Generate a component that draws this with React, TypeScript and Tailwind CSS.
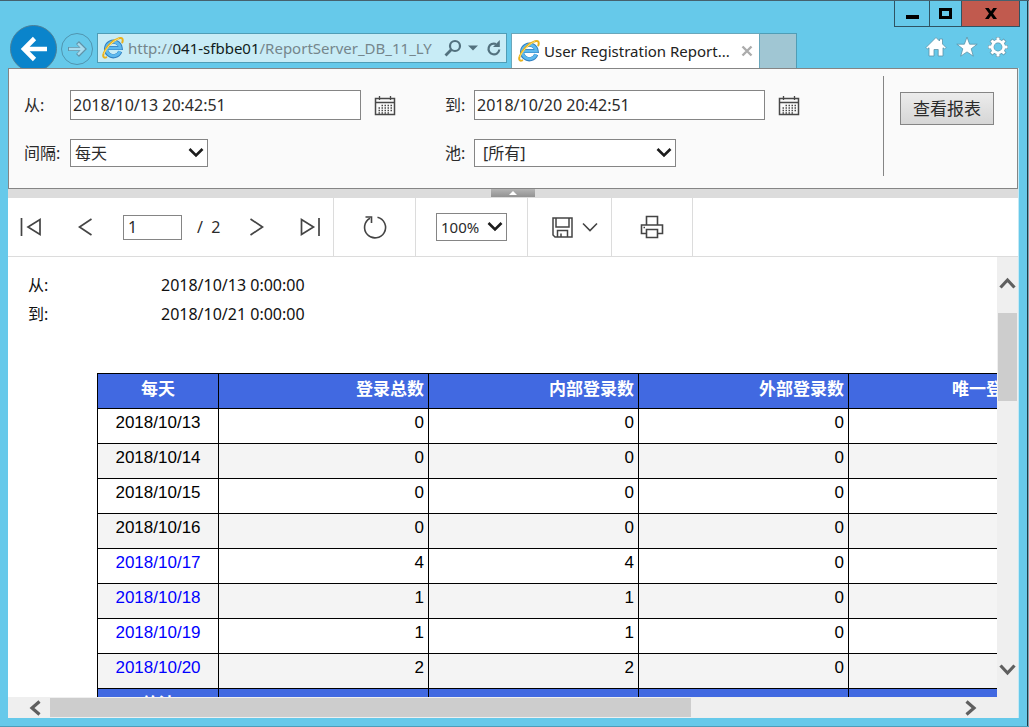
import React from "react";

const rows = [
  { date: "2018/10/13", total: 0, internal: 0, external: 0, link: false },
  { date: "2018/10/14", total: 0, internal: 0, external: 0, link: false },
  { date: "2018/10/15", total: 0, internal: 0, external: 0, link: false },
  { date: "2018/10/16", total: 0, internal: 0, external: 0, link: false },
  { date: "2018/10/17", total: 4, internal: 4, external: 0, link: true },
  { date: "2018/10/18", total: 1, internal: 1, external: 0, link: true },
  { date: "2018/10/19", total: 1, internal: 1, external: 0, link: true },
  { date: "2018/10/20", total: 2, internal: 2, external: 0, link: true },
];

const headings = ["每天", "登录总数", "内部登录数", "外部登录数", "唯一登录总数"];

function ExplorerLogo() {
  return (
    <svg width="22" height="22" viewBox="0 0 22 22" fill="none" className="shrink-0">
      <path d="M18.2 14.5A7.3 7.3 0 1 1 18.6 11H6" stroke="#2f7fc0" strokeWidth="4.2" />
      <path d="M18 14.3A7 7 0 1 1 18.4 11.2H6" stroke="#5db9ee" strokeWidth="2.8" />
      <path
        d="M4.2 20.4C1.4 21.4.6 19.200 1.700 16.400C3.600 11 10.500 3.200 17 1.300C20.600.2 21.300 2.400 20.300 5.500"
        stroke="#e9b21c"
        strokeWidth="2"
        strokeLinecap="round"
      />
      <path d="M2 17C4 11.500 10.500 4 17 1.600" stroke="#ffe27a" strokeWidth="1" />
    </svg>
  );
}

function CalendarIcon() {
  return (
    <svg width="22" height="21" viewBox="0 0 22 21" fill="none" stroke="#484848">
      <path d="M1.500 3.500h19v16h-19z" strokeWidth="1.500" />
      <path d="M1 7.500h20M5.500 1v4M16.500 1v4" strokeWidth="1.300" />
      <path d="M7.500 10.500h11M4.500 13h14M4.500 15.500h14M4.500 18h11" strokeWidth="1.500" strokeDasharray="1.500 1.500" />
    </svg>
  );
}

function BoldChevron() {
  return (
    <svg
      width="16"
      height="11"
      viewBox="0 0 16 11"
      fill="none"
      className="pointer-events-none absolute right-1 top-1/2 -translate-y-1/2"
    >
      <path d="M1.500 1.500L8 8L14.500 1.500" stroke="#1c1c1c" strokeWidth="2.600" />
    </svg>
  );
}

function ScrollArrow({ d, width, height, label }: { d: string; width: number; height: number; label: string }) {
  return (
    <button type="button" aria-label={label} className="flex shrink-0 items-center justify-center">
      <svg width={width} height={height} viewBox={`0 0 ${width} ${height}`} fill="none">
        <path d={d} stroke="#5f5f5f" strokeWidth="3.200" />
      </svg>
    </button>
  );
}

function Header() {
  return (
    <header className="flex h-[67px] shrink-0 items-start overflow-hidden">
      <div className="flex min-w-0 flex-1 items-start pl-[10px] pt-6">
        <button
          type="button"
          aria-label="后退"
          className="flex h-[47px] w-[47px] shrink-0 items-center justify-center rounded-full border border-[#4b7f97] bg-[#0a84cb]"
        >
          <svg width="28" height="26" viewBox="0 0 28 26" fill="none">
            <path d="M27 13H5M14.500 2.500L4 13L14.500 23.500" stroke="#fff" strokeWidth="4.600" />
          </svg>
        </button>
        <button
          type="button"
          aria-label="前进"
          className="ml-1 mt-2 flex h-8 w-8 shrink-0 items-center justify-center rounded-full border border-[#5095b0]"
        >
          <svg width="20" height="16" viewBox="0 0 20 16" fill="none">
            <path d="M1 8H17M10.500 1.500L17 8L10.500 14.500" stroke="#6193a8" strokeWidth="4.200" />
            <path d="M2 8H16M11 2.500L16.500 8L11 13.500" stroke="#a9dcef" strokeWidth="2.400" />
          </svg>
        </button>
        <div className="ml-1 mt-2 flex h-[30px] w-[410px] items-center border border-[#4f9db6] bg-[#c8ecf6] pl-1 pr-1">
          <ExplorerLogo />
          <span className="ml-1 min-w-0 flex-1 overflow-hidden whitespace-nowrap text-[15px] text-[#75868c]">
            http://<span className="text-[#111b20]">041-sfbbe01</span>/ReportServer_DB_11_LY
          </span>
          <button type="button" aria-label="搜索" className="ml-[6px] shrink-0">
            <svg width="18" height="18" viewBox="0 0 18 18" fill="none" stroke="#52717e">
              <circle cx="11" cy="7" r="5" strokeWidth="2.200" />
              <path d="M7.200 10.800L1.500 16.500" strokeWidth="2.800" />
            </svg>
          </button>
          <button type="button" aria-label="显示地址列表" className="ml-[6px] shrink-0">
            <svg width="10" height="6" viewBox="0 0 10 6">
              <path d="M0 .5h10L5 5.500z" fill="#52717e" />
            </svg>
          </button>
          <button type="button" aria-label="刷新" className="ml-2 shrink-0">
            <svg width="16" height="18" viewBox="0 0 16 18" fill="none">
              <path d="M13.300 10.500A5.400 5.400 0 1 1 10 5" stroke="#52717e" strokeWidth="2.200" />
              <path d="M13.800 1v7H7z" fill="#52717e" />
            </svg>
          </button>
        </div>
        <div className="ml-1 mt-2 flex h-[35px] w-[249px] items-center border border-b-0 border-[#6aa7bb] bg-white pl-[6px] pr-[6px]">
          <ExplorerLogo />
          <span className="ml-1 min-w-0 flex-1 overflow-hidden whitespace-nowrap text-[15px] text-[#222]">
            User Registration Report...
          </span>
          <button type="button" aria-label="关闭选项卡" className="ml-1 shrink-0">
            <svg width="12" height="12" viewBox="0 0 12 12">
              <path d="M1.500 1.500L10.500 10.500M10.500 1.500L1.500 10.500" stroke="#acacac" strokeWidth="2.400" />
            </svg>
          </button>
        </div>
        <button
          type="button"
          aria-label="新建选项卡"
          className="mt-2 h-[35px] w-[37px] shrink-0 border border-b-0 border-l-0 border-[#4f9db6] bg-[#a0c6d3]"
        />
      </div>
      <div className="flex shrink-0 flex-col items-end pr-[7px]">
        <div className="flex h-[26px] border border-t-0 border-[#2f5363]">
          <button type="button" aria-label="最小化" className="flex w-[35px] items-center justify-center border-r border-[#2f5363]">
            <svg width="13" height="12" viewBox="0 0 13 12">
              <path d="M0 7h13v4H0z" fill="#000" />
            </svg>
          </button>
          <button type="button" aria-label="最大化" className="flex w-8 items-center justify-center border-r border-[#2f5363]">
            <svg width="13" height="11" viewBox="0 0 13 11" fill="none">
              <path d="M1.500 1.500h10v8h-10z" stroke="#000" strokeWidth="3" />
            </svg>
          </button>
          <button type="button" aria-label="关闭" className="flex w-[57px] items-center justify-center bg-[#c15a4e]">
            <svg width="12" height="11" viewBox="0 0 12 11">
              <path d="M0 0h3.700L6 3.200L8.300 0H12L8 5.500L12 11H8.300L6 7.800L3.700 11H0L4 5.500z" fill="#000" />
            </svg>
          </button>
        </div>
        <div className="mr-[11px] flex items-center gap-[9px] pt-[9px]">
          <button type="button" aria-label="主页">
            <svg width="22" height="22" viewBox="0 0 22 22" fill="#fff" stroke="#5b93a8" strokeWidth=".8">
              <path d="M11 1.500L14.500 5V3H17.500V8L21 11.500L19.500 13L18 11.800V20H13.200V13.500H9V20H4V11.800L2.500 13L1 11.500z" />
            </svg>
          </button>
          <button type="button" aria-label="收藏夹">
            <svg width="22" height="22" viewBox="0 0 22 22" fill="#fff" stroke="#5b93a8" strokeWidth=".8">
              <path d="M11 1L13.600 8.200H21.200L15.200 12.800L17.300 20.200L11 15.900L4.700 20.200L6.800 12.800L.8 8.200H8.400z" />
            </svg>
          </button>
          <button type="button" aria-label="工具">
            <svg width="22" height="22" viewBox="0 0 22 22" fill="none">
              <path
                d="M11 1V5M11 17V21M1 11H5M17 11H21M4 4L7 7M15 15L18 18M18 4L15 7M7 15L4 18"
                stroke="#5b93a8"
                strokeWidth="4.200"
              />
              <circle cx="11" cy="11" r="5.800" stroke="#5b93a8" strokeWidth="4" />
              <path
                d="M11 1.500V5M11 17V20.500M1.500 11H5M17 11H20.500M4.500 4.500L7 7M15 15L17.500 17.500M17.500 4.500L15 7M7 15L4.500 17.500"
                stroke="#fff"
                strokeWidth="3"
              />
              <circle cx="11" cy="11" r="5.800" stroke="#fff" strokeWidth="2.800" />
            </svg>
          </button>
        </div>
      </div>
    </header>
  );
}

function Parameters() {
  return (
    <form
      className="flex shrink-0 items-start border border-[#858585] bg-[#fafafa] py-[7px] text-base text-[#2b2b2b]"
      onSubmit={(e) => e.preventDefault()}
    >
      <div className="grid min-w-0 flex-1 grid-cols-[46px_minmax(0,291px)_84px_29px_minmax(0,291px)_48px] content-start items-center gap-y-[19px] pb-[14px] pl-[15px] pt-[14px]">
        <label htmlFor="from">从:</label>
        <input
          id="from"
          defaultValue="2018/10/13 20:42:51"
          className="h-[30px] w-full rounded-none border border-[#858585] bg-white px-[2px] outline-none"
        />
        <button type="button" aria-label="选择开始日期" className="ml-[13px] justify-self-start">
          <CalendarIcon />
        </button>
        <label htmlFor="to">到:</label>
        <input
          id="to"
          defaultValue="2018/10/20 20:42:51"
          className="h-[30px] w-full rounded-none border border-[#858585] bg-white px-[2px] outline-none"
        />
        <button type="button" aria-label="选择结束日期" className="ml-[13px] justify-self-start">
          <CalendarIcon />
        </button>
        <label htmlFor="interval" className="whitespace-nowrap">
          间隔:
        </label>
        <div className="relative w-[138px]">
          <select
            id="interval"
            className="block h-7 w-full appearance-none rounded-none border border-[#858585] bg-white pl-1 pr-6 outline-none"
          >
            <option>每天</option>
          </select>
          <BoldChevron />
        </div>
        <span />
        <label htmlFor="pool">池:</label>
        <div className="relative w-[202px]">
          <select
            id="pool"
            className="block h-7 w-full appearance-none rounded-none border border-[#858585] bg-white pl-2 pr-6 outline-none"
          >
            <option>[所有]</option>
          </select>
          <BoldChevron />
        </div>
      </div>
      <div className="h-[100px] shrink-0 border-l border-[#858585] pl-4 pr-[23px] pt-4">
        <button
          type="submit"
          className="h-[33px] w-[94px] border border-[#858585] bg-linear-to-b from-[#ececec] to-[#d6d6d6] text-[17px] leading-6"
        >
          查看报表
        </button>
      </div>
    </form>
  );
}

function Toolbar() {
  return (
    <div className="flex h-[59px] shrink-0 border-b border-[#dcdcdc] bg-white text-[#2b2b2b]">
      <div className="flex w-[326px] shrink-0 items-center border-r border-[#dcdcdc] pl-3">
        <button type="button" aria-label="第一页">
          <svg width="22" height="20" viewBox="0 0 22 20" fill="none" stroke="#444" strokeWidth="1.700">
            <path d="M1.500 1V19M20 2.500V17.500L8 10z" />
          </svg>
        </button>
        <button type="button" aria-label="上一页" className="ml-9">
          <svg width="15" height="20" viewBox="0 0 15 20" fill="none" stroke="#444" strokeWidth="1.700">
            <path d="M13.500 2L1.500 10L13.500 18" />
          </svg>
        </button>
        <input
          aria-label="当前页"
          defaultValue="1"
          className="ml-[30px] h-[25px] w-[59px] rounded-none border border-[#858585] bg-white px-1 text-base leading-5 outline-none"
        />
        <span className="ml-[15px] w-9 whitespace-pre text-base">/  2</span>
        <button type="button" aria-label="下一页" className="ml-4">
          <svg width="15" height="20" viewBox="0 0 15 20" fill="none" stroke="#444" strokeWidth="1.700">
            <path d="M1.500 2L13.500 10L1.500 18" />
          </svg>
        </button>
        <button type="button" aria-label="最后一页" className="ml-[35px]">
          <svg width="22" height="20" viewBox="0 0 22 20" fill="none" stroke="#444" strokeWidth="1.700">
            <path d="M20 1V19M2.500 2.500V17.500L14.500 10z" />
          </svg>
        </button>
      </div>
      <div className="flex w-[82px] shrink-0 items-center justify-center border-r border-[#dcdcdc]">
        <button type="button" aria-label="刷新报表">
          <svg width="26" height="26" viewBox="0 0 26 26" fill="none" stroke="#444" strokeWidth="1.600">
            <path d="M15.500 3.200A10.500 10.500 0 1 1 8 4.200" />
            <path d="M3.500 3h6v6" />
          </svg>
        </button>
      </div>
      <div className="flex w-[112px] shrink-0 items-center justify-center border-r border-[#dcdcdc]">
        <div className="relative">
          <select
            aria-label="缩放"
            className="block h-7 w-[71px] appearance-none rounded-none border border-[#858585] bg-white pl-1 pr-5 text-[15px] outline-none"
          >
            <option>100%</option>
          </select>
          <BoldChevron />
        </div>
      </div>
      <div className="flex w-[84px] shrink-0 items-center justify-end border-r border-[#dcdcdc] pr-[13px]">
        <button type="button" aria-label="导出" className="flex items-center gap-[9px]">
          <svg width="21" height="21" viewBox="0 0 21 21" fill="none" stroke="#444" strokeWidth="1.500">
            <path d="M1 1H20V20H3L1 18z" />
            <path d="M4 1V10H17V1M5.500 20V13.500H15.500V20M9 20V16.500" />
          </svg>
          <svg width="16" height="10" viewBox="0 0 16 10" fill="none" stroke="#444" strokeWidth="1.600">
            <path d="M1 1.500L8 8.500L15 1.500" />
          </svg>
        </button>
      </div>
      <div className="flex w-[81px] shrink-0 items-center justify-center border-r border-[#dcdcdc]">
        <button type="button" aria-label="打印">
          <svg width="24" height="24" viewBox="0 0 24 24" fill="none" stroke="#444" strokeWidth="1.600">
            <path d="M6.500 10V1.500H17.500V10M6.500 18.500H1.500V10H22.500V18.500H17.500M6.500 14.500H17.500V22.500H6.500z" />
            <path d="M3.500 12.500H5" />
          </svg>
        </button>
      </div>
    </div>
  );
}

function Report() {
  return (
    <div className="flex min-h-0 flex-1 bg-white">
      <div className="min-w-0 flex-1 overflow-hidden">
        <dl className="grid grid-cols-[133px_1fr] gap-y-[5px] pl-5 pt-4 text-base text-[#111]">
          <dt>从:</dt>
          <dd>2018/10/13 0:00:00</dd>
          <dt>到:</dt>
          <dd>2018/10/21 0:00:00</dd>
        </dl>
        <table className="ml-[89px] mt-[47px] w-[962px] table-fixed border-collapse font-['Liberation_Sans','Noto_Sans_CJK_SC',sans-serif] text-[17px] leading-5 text-black">
          <colgroup>
            <col className="w-[121px]" />
            <col className="w-[210px]" />
            <col className="w-[210px]" />
            <col className="w-[210px]" />
            <col className="w-[210px]" />
          </colgroup>
          <thead>
            <tr className="h-[35px] bg-[#4169e1] text-white">
              {headings.map((h, i) => (
                <th
                  key={h}
                  className={
                    i === 0
                      ? "border border-black px-1 pt-[6px] text-center align-top font-bold"
                      : "border border-black px-1 pt-[6px] text-right align-top font-bold"
                  }
                >
                  {h}
                </th>
              ))}
            </tr>
          </thead>
          <tbody>
            {rows.map((r) => (
              <tr key={r.date} className="h-[35px] odd:bg-white even:bg-[#f4f4f4]">
                <td className="border border-black px-1 pt-1 text-center align-top">
                  {r.link ? (
                    <a href="#detail" className="text-[#0000ff]">
                      {r.date}
                    </a>
                  ) : (
                    r.date
                  )}
                </td>
                {[r.total, r.internal, r.external].map((v, i) => (
                  <td key={i} className="border border-black px-1 pt-1 text-right align-top">
                    {v}
                  </td>
                ))}
                <td className="border border-black" />
              </tr>
            ))}
          </tbody>
          <tfoot>
            <tr className="h-[35px] bg-[#4169e1] font-bold text-white">
              <td className="border border-black px-1 pt-[6px] text-center align-top">总计</td>
              {[8, 8, 0].map((v, i) => (
                <td key={i} className="border border-black px-1 pt-[6px] text-right align-top">
                  {v}
                </td>
              ))}
              <td className="border border-black" />
            </tr>
          </tfoot>
        </table>
      </div>
      <div className="flex w-[21px] shrink-0 flex-col bg-[#efefef] px-px pb-[21px] pt-5">
        <ScrollArrow label="向上滚动" width={17} height={12} d="M1.500 10.500L8.500 3L15.500 10.500" />
        <div className="mt-6 h-[88px] bg-[#cdcdcd]" />
        <div className="flex-1" />
        <ScrollArrow label="向下滚动" width={17} height={12} d="M1.500 1.500L8.500 9L15.500 1.500" />
      </div>
    </div>
  );
}

export default function App() {
  return (
    <div className="flex h-screen flex-col overflow-hidden border-b border-t border-b-[#4d9db9] border-t-[#45616e] bg-[#66c9ea] font-['Noto_Sans','Noto_Sans_CJK_SC',sans-serif]">
      <div className="flex min-h-0 flex-1 border-r border-[#7fa3b1]">
        <div className="flex min-w-0 flex-1 flex-col border-r border-[#203a46] pb-2">
          <Header />
          <main className="ml-2 mr-2 flex min-h-0 flex-1 flex-col border-r border-[#c4e9f5]">
            <Parameters />
            <div className="flex h-[9px] shrink-0 justify-center bg-[#dcdcdc]">
              <button
                type="button"
                aria-label="隐藏参数"
                className="flex h-2 w-11 items-center justify-center bg-linear-to-b from-[#b4b4b4] to-[#929292]"
              >
                <svg width="8" height="4" viewBox="0 0 8 4">
                  <path d="M4 0L8 4H0z" fill="#fff" />
                </svg>
              </button>
            </div>
            <Toolbar />
            <Report />
            <div className="flex h-[21px] shrink-0 bg-[#efefef] py-px pl-5">
              <ScrollArrow label="向左滚动" width={13} height={16} d="M11.500 1.500L4 8L11.500 14.500" />
              <div className="ml-[9px] w-2/3 max-w-[641px] bg-[#cdcdcd]" />
              <div className="flex-1" />
              <div className="mr-10 flex">
                <ScrollArrow label="向右滚动" width={13} height={16} d="M1.500 1.500L9 8L1.500 14.500" />
              </div>
            </div>
          </main>
        </div>
      </div>
    </div>
  );
}
